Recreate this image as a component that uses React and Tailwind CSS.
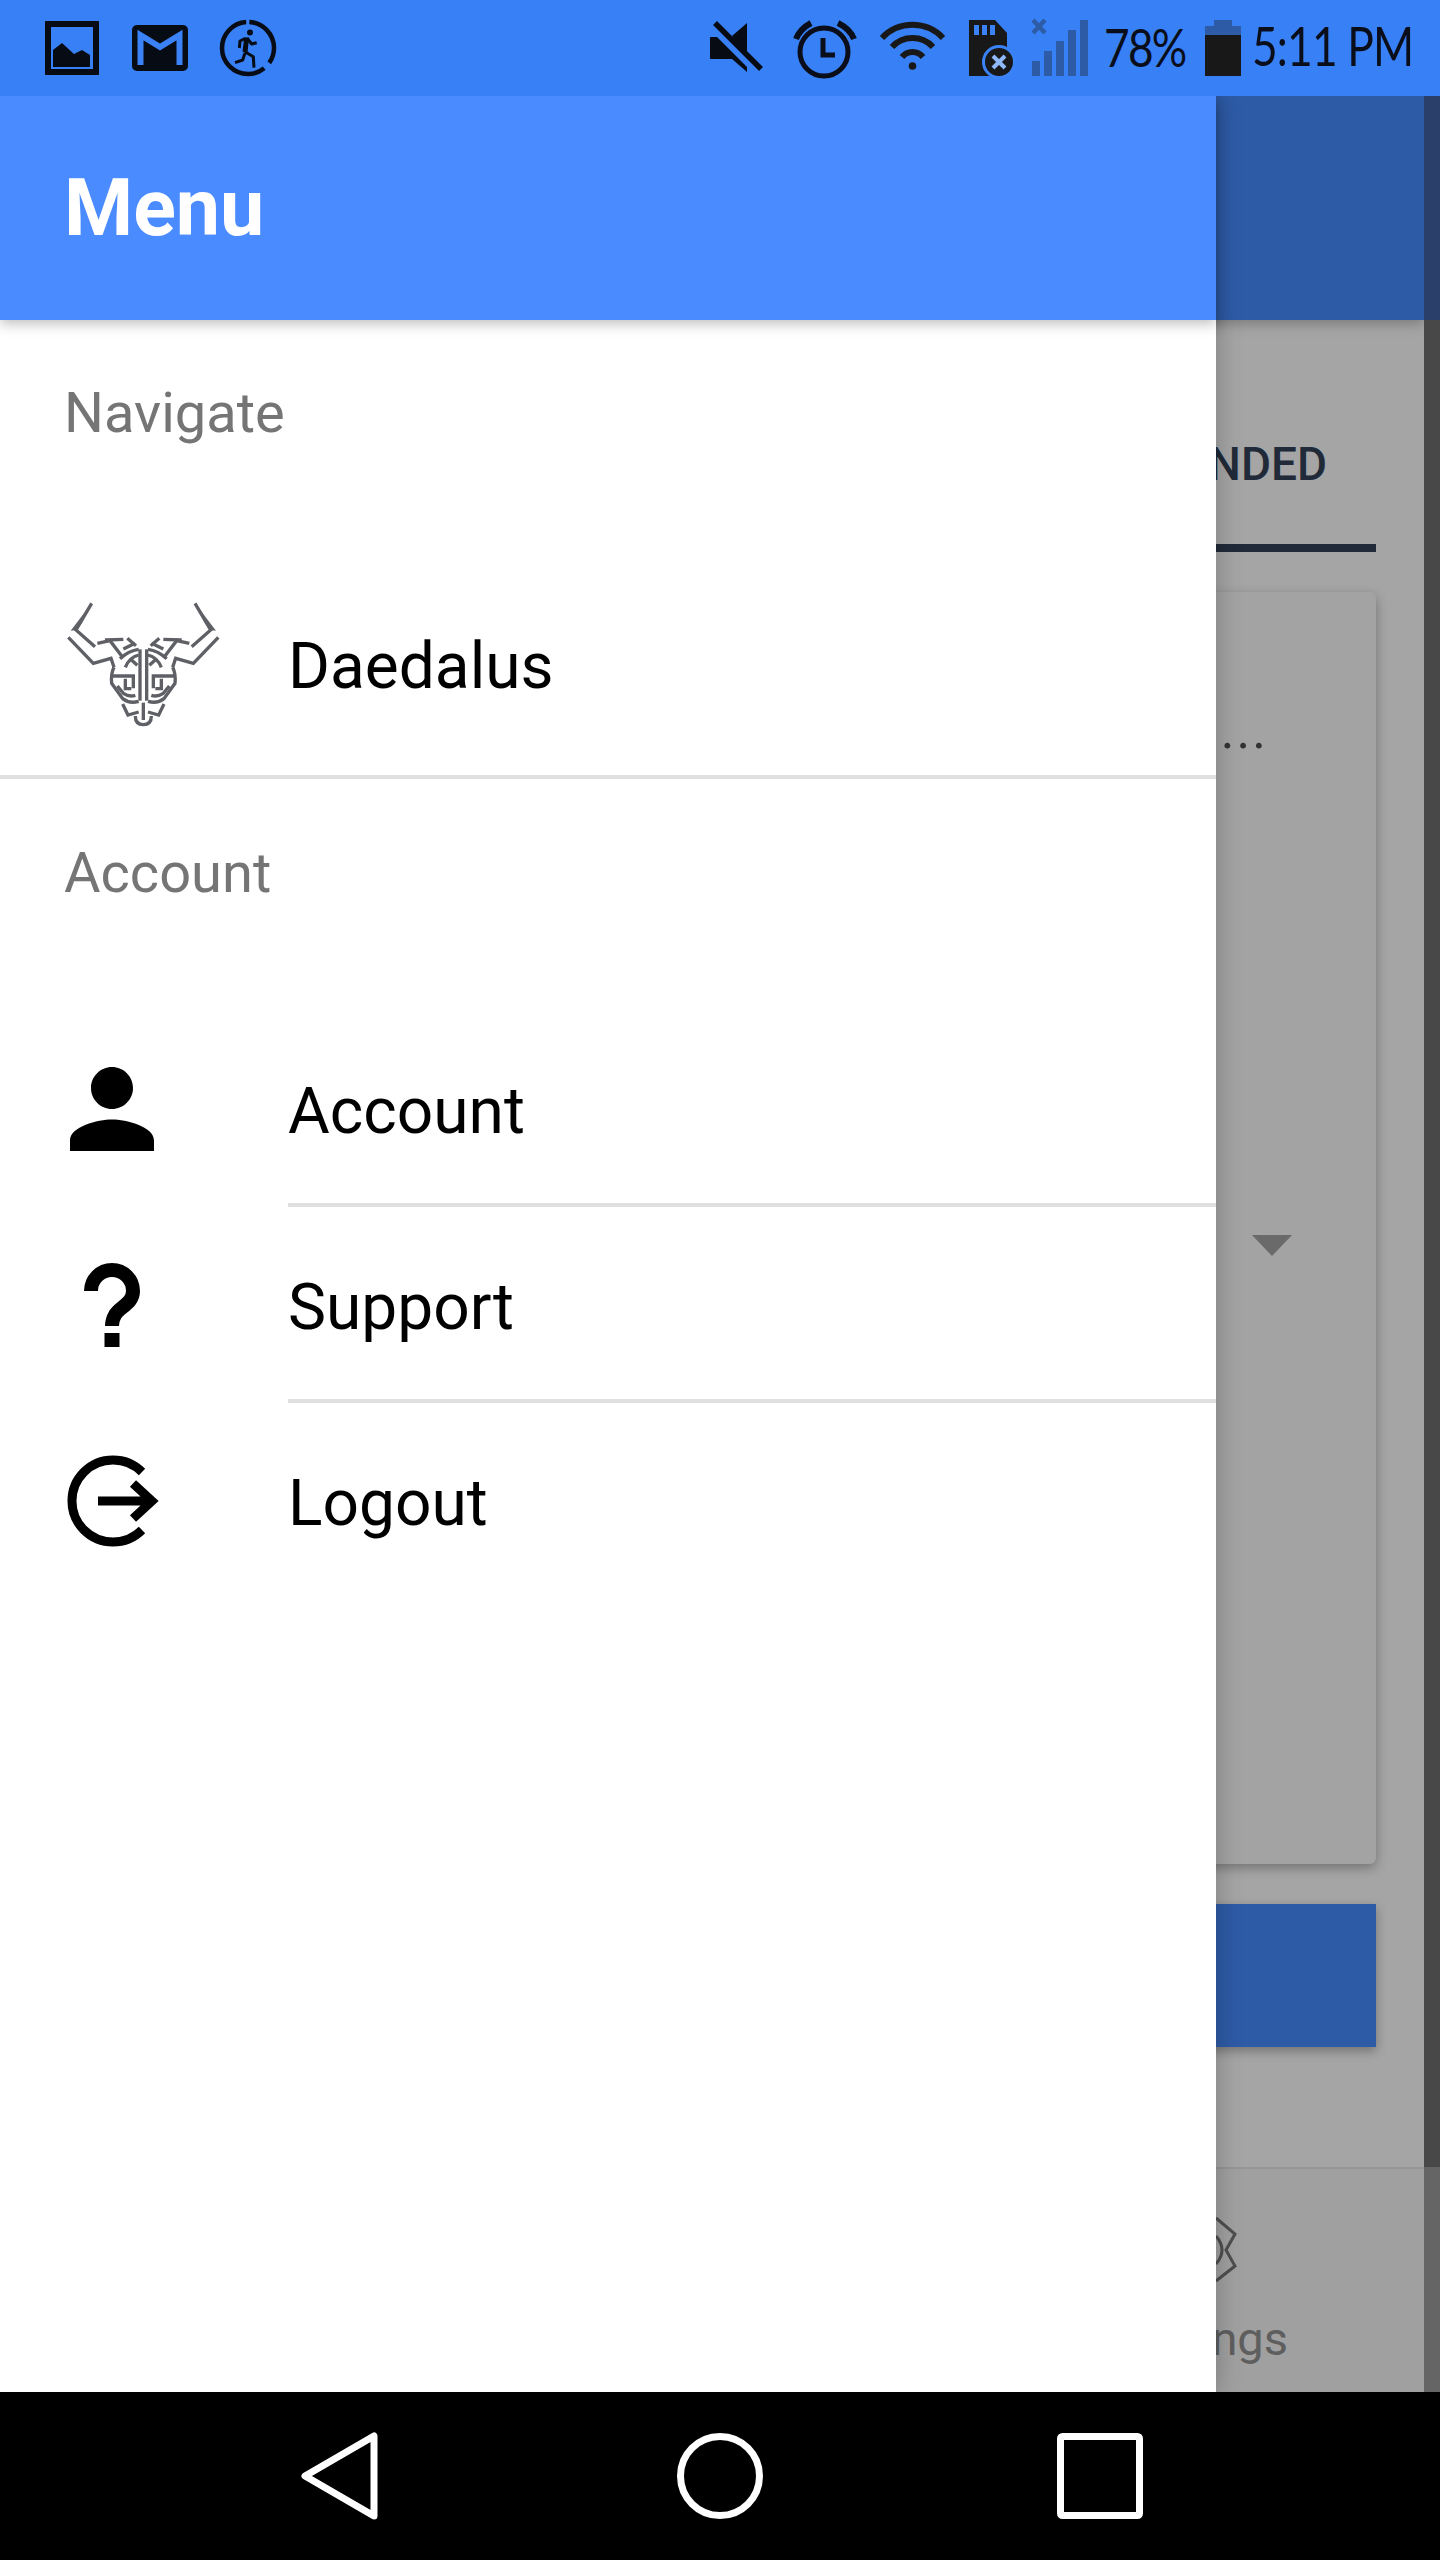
const logoLines = [
  "M155 70 L108 150 L165 200",
  "M85 172 L160 250 L213 235 L222 262",
  "M172 190 L210 182 L248 232",
  "M195 180 L250 178",
  "M250 207 L285 190",
  "M262 175 L288 197",
  "M240 236 Q266 212 296 208",
  "M256 262 Q268 232 296 225",
  "M272 238 L292 256",
  "M300 208 V362",
  "M222 262 Q212 282 215 310 L248 356 Q268 372 296 364",
  "M218 288 H280 V325",
  "M232 318 L250 340 Q268 352 286 346",
  "M256 296 V326 H274",
  "M248 372 L264 405 L296 396",
];

function DaedalusLogo() {
  const shape = (
    <>
      <polygon points="155,70 92,152 110,150 125,130" fill="#5f6066" />
      {logoLines.map((d, i) => (
        <path key={i} d={d} fill="none" stroke="#5f6066" strokeWidth="10" />
      ))}
    </>
  );
  return (
    <svg width="200" height="160" viewBox="0 0 600 480" className="shrink-0">
      {shape}
      <g transform="translate(620,0) scale(-1,1)">{shape}</g>
      <path d="M286 408 Q286 434 310 434 Q334 434 334 408" fill="none" stroke="#5f6066" strokeWidth="10" />
      <path d="M310 368 V420" fill="none" stroke="#5f6066" strokeWidth="10" />
    </svg>
  );
}

function StatusLeft() {
  return (
    <div className="flex items-center">
      <svg width="54" height="54" viewBox="0 0 54 54" className="ml-[45px]">
        <rect x="3" y="3" width="48" height="48" fill="none" stroke="#070b14" strokeWidth="6" />
        <path d="M8 29 L17 22 L29 33 L37 29 L45 34 V46 H8 Z" fill="#070b14" />
      </svg>
      <svg width="56" height="46" viewBox="0 0 56 46" className="ml-[33px]">
        <rect width="56" height="46" rx="5" fill="#070b14" />
        <path d="M8.5 40 V10 L28 22 L47.5 10 V40" fill="none" stroke="#3b82f6" strokeWidth="6" />
      </svg>
      <svg width="58" height="58" viewBox="0 0 58 58" className="ml-[31px]">
        <circle cx="29" cy="29" r="26" fill="none" stroke="#070b14" strokeWidth="4.5" strokeDasharray="55 7.3 96.7 4.5" strokeDashoffset="-1.4" transform="rotate(-90 29 29)" />
        <circle cx="31" cy="13.5" r="3" fill="#070b14" />
        <path d="M27.7 18.5 L26 33" fill="none" stroke="#070b14" strokeWidth="5" />
        <path d="M28 19 L32.7 25 L37.7 23.7 M26 19.5 L21 22 L20.3 29 M26 32.7 L34.3 37.7 L35 48.7 M26 34 L23.7 41 L16 43.7" fill="none" stroke="#070b14" strokeWidth="3" strokeLinejoin="round" />
      </svg>
    </div>
  );
}

function StatusRight() {
  return (
    <div className="ml-auto flex items-start h-full text-[#0a0e1a]">
      <svg width="54" height="52" viewBox="0 0 54 52" className="mt-[21px]">
        <path d="M22 15 L37 2 V33 Z M0 16 H7 L37 46 V51 L22 38 H0 Z" fill="#070b14" />
        <path d="M5 2 L51 48" stroke="#070b14" strokeWidth="5.5" />
      </svg>
      <svg width="68" height="62" viewBox="0 0 68 62" className="ml-[28px] mt-[18px]">
        <circle cx="32" cy="34" r="24" fill="none" stroke="#0a0e1a" strokeWidth="5" />
        <path d="M31 20 V37 H43" fill="none" stroke="#0a0e1a" strokeWidth="5" />
        <path d="M4 21 Q8 11 19 5 M62 21 Q58 11 46 5" fill="none" stroke="#0a0e1a" strokeWidth="6" />
      </svg>
      <svg width="70" height="52" viewBox="0 0 70 52" className="ml-[18px] mt-[20px]">
        <path d="M4 18 A42 42 0 0 1 65 18 M14 27 A28 28 0 0 1 55 27 M24 37 A13.5 13.5 0 0 1 45 37" fill="none" stroke="#181818" strokeWidth="6" />
        <circle cx="34.5" cy="46" r="3.8" fill="#181818" />
      </svg>
      <svg width="46" height="59" viewBox="0 0 46 59" className="ml-[21px] mt-[20px]">
        <path d="M0 0 H26 L38 13 V56 H0 Z" fill="#181818" />
        <path d="M7.5 5 V15 M15.5 5 V15 M23.5 5 V15" stroke="#3b82f6" strokeWidth="5" />
        <circle cx="30" cy="42" r="15.5" fill="#181818" stroke="#3b82f6" strokeWidth="3" />
        <path d="M24 36 L36 48 M36 36 L24 48" stroke="#8fb8f8" strokeWidth="4" />
      </svg>
      <svg width="56" height="58" viewBox="0 0 56 58" className="ml-[17px] mt-[18px]">
        <path d="M1 2 L13 15 M13 2 L1 15" stroke="#2e5ba6" strokeWidth="4.5" />
        <path d="M0 43 H8 V58 H0 Z M12 33 H20 V58 H12 Z M24 23 H32 V58 H24 Z M36 12 H44 V58 H36 Z M48 2 H56 V58 H48 Z" fill="#2e5ba6" />
      </svg>
      <span className="ml-[16px] mt-[21px] w-[79px] inline-block origin-left scale-x-[0.85] font-['Lato',sans-serif] text-[52px] leading-none tracking-[-2px] whitespace-nowrap">78%</span>
      <svg width="36" height="56" viewBox="0 0 36 56" className="ml-[22px] mt-[20px]">
        <path d="M9 0 H27 V6 H36 V56 H0 V6 H9 Z" fill="#2e5ba6" />
        <rect y="15" width="36" height="41" fill="#181818" />
      </svg>
      <span className="ml-[11px] mr-[30px] mt-[19px] w-[158px] inline-block origin-left scale-x-[0.82] font-['Lato',sans-serif] text-[54px] leading-none tracking-[-1px] whitespace-nowrap">5:11 PM</span>
    </div>
  );
}

function PersonIcon() {
  return (
    <svg width="126" height="126" viewBox="0 0 24 24">
      <path d="M12 12c2.21 0 4-1.79 4-4s-1.79-4-4-4-4 1.79-4 4 1.79 4 4 4zm0 2c-2.67 0-8 1.34-8 4v2h16v-2c0-2.66-5.33-4-8-4z" fill="#000" />
    </svg>
  );
}

function HelpIcon() {
  return (
    <svg width="126" height="126" viewBox="0 0 126 126">
      <path d="M42 49 A21 21 0 0 1 84 49 C84 62 70 65 66 73 Q63 78 63 84" fill="none" stroke="#000" strokeWidth="14" />
      <rect x="55.5" y="91" width="15" height="14" fill="#000" />
    </svg>
  );
}

function LogoutIcon() {
  return (
    <svg width="126" height="126" viewBox="0 0 126 126">
      <path d="M93 34 A41 41 0 1 0 93 92" fill="none" stroke="#000" strokeWidth="9" />
      <path d="M49 63 H102 M84 45.5 L103 63 L84 80.5" fill="none" stroke="#000" strokeWidth="9" />
    </svg>
  );
}

function MenuRow({ icon, label, divider }) {
  return (
    <div className="flex h-[196px] items-center relative">
      <div className="w-[288px] shrink-0 pl-[49px]">{icon}</div>
      <span className="text-[64px] text-black pt-[5px]">{label}</span>
      {divider && <div className="absolute left-[288px] right-0 bottom-0 h-[4px] bg-[#e0e0e0]" />}
    </div>
  );
}

function SectionLabel({ children }) {
  return <div className="pl-[64px] text-[56px] leading-none text-[#757575]">{children}</div>;
}

export default function App() {
  return (
    <div className="w-[1440px] h-[2560px] flex flex-col overflow-hidden bg-black font-['Roboto',sans-serif]">
      {/* status bar */}
      <div className="relative z-10 h-[96px] shrink-0 flex items-center bg-[#3880f6]">
        <StatusLeft />
        <StatusRight />
      </div>

      <div className="relative flex-1 flex min-h-0">
        {/* dimmed page behind the drawer */}
        <div className="flex-1 flex flex-col bg-[#a5a5a5]">
          <div className="h-[224px] shrink-0 bg-[#2e5ba6] shadow-[0_4px_12px_rgba(0,0,0,0.25)]" />
          <div className="flex-1 flex flex-col items-end pr-[48px]">
            <div className="w-[500px] h-[232px] shrink-0 flex flex-col">
              <div className="flex-1 flex items-center justify-end pr-[49px] pt-[64px]">
                <span className="text-[46px] font-medium text-[#202a38]">EXPANDED</span>
              </div>
              <div className="h-[8px] bg-[#202a38]" />
            </div>
            <div className="mt-[40px] w-[500px] h-[1272px] shrink-0 relative rounded-[6px] bg-[#a3a3a3] shadow-[0_4px_12px_rgba(0,0,0,0.3)]">
              <span className="absolute top-[100px] right-[108px] text-[52px] tracking-[2px] text-[#333333] whitespace-nowrap">Description...</span>
              <div className="absolute right-[84px] top-[643px] w-0 h-0 border-x-[20px] border-x-transparent border-t-[21px] border-t-[#6a6a6a]" />
            </div>
            <div className="mt-[40px] w-[500px] h-[143px] shrink-0 bg-[#2e5ba6] shadow-[0_4px_10px_rgba(0,0,0,0.3)]" />
          </div>
          <div className="h-[225px] shrink-0 bg-[#a0a0a0] border-t-2 border-[#969696] relative">
            <svg width="44" height="80" viewBox="0 0 44 80" className="absolute right-[184px] top-[40px]">
              <path d="M20 9 L39 25 L30 41 L39 57 L20 72 M20 27 Q32 41 20 55" fill="none" stroke="#4e4e4e" strokeWidth="3" />
            </svg>
            <span className="absolute right-[136px] top-[135px] text-[47px] text-[#5e5e5e]">Settings</span>
          </div>
        </div>
        <div className="w-[16px] shrink-0 flex flex-col bg-[#484848]">
          <div className="h-[224px] bg-[#2a3f6a]" />
          <div className="flex-1" />
          <div className="h-[225px] bg-[#656565]" />
        </div>

        {/* drawer */}
        <div className="absolute left-0 top-0 bottom-0 w-[1216px] flex flex-col bg-white shadow-[0_0_24px_rgba(0,0,0,0.25)]">
          <div className="h-[224px] shrink-0 flex items-center pl-[64px] bg-[#4a8cff] shadow-[0_4px_12px_rgba(0,0,0,0.25)] relative">
            <span className="text-[79px] font-bold text-white">Menu</span>
          </div>

          <div className="pt-[65px]"><SectionLabel>Navigate</SectionLabel></div>
          <div className="h-[160px] mt-[139px] flex items-center">
            <div className="w-[288px] shrink-0 pl-[40px]"><DaedalusLogo /></div>
            <span className="text-[64px] text-black pt-[13px]">Daedalus</span>
          </div>
          <div className="h-[4px] mt-[35px] bg-[#e0e0e0]" />

          <div className="pt-[66px]"><SectionLabel>Account</SectionLabel></div>
          <div className="mt-[110px]">
            <MenuRow label="Account" divider icon={<PersonIcon />} />
            <MenuRow label="Support" divider icon={<HelpIcon />} />
            <MenuRow label="Logout" icon={<LogoutIcon />} />
          </div>
        </div>
      </div>

      {/* nav bar */}
      <div className="h-[168px] shrink-0 bg-black flex items-center pl-[301px]">
        <svg width="78" height="88" viewBox="0 0 78 88">
          <path d="M73 4 V84 L4 44 Z" fill="none" stroke="#fff" strokeWidth="7" strokeLinejoin="round" />
        </svg>
        <svg width="88" height="88" viewBox="0 0 88 88" className="ml-[297px]">
          <circle cx="44" cy="44" r="39.5" fill="none" stroke="#fff" strokeWidth="7" />
        </svg>
        <svg width="88" height="88" viewBox="0 0 88 88" className="ml-[292px]">
          <rect x="4.5" y="4.5" width="79" height="79" rx="2" fill="none" stroke="#fff" strokeWidth="7" />
        </svg>
      </div>
    </div>
  );
}
